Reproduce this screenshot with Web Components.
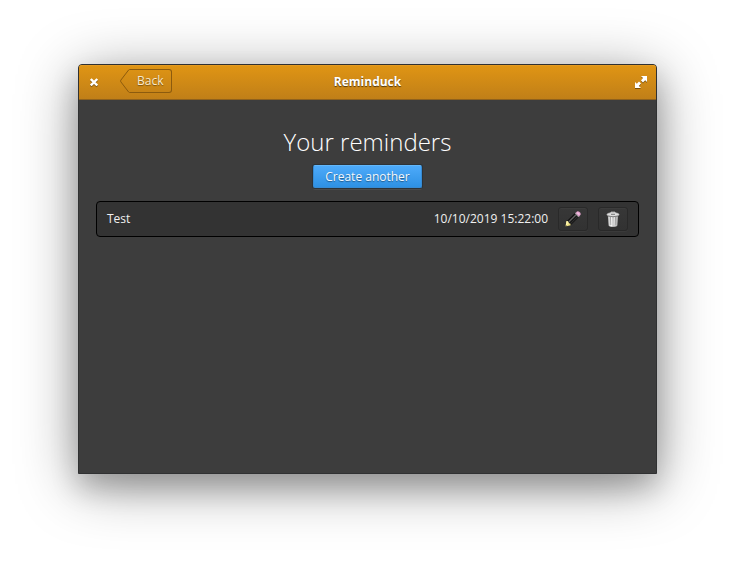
<!DOCTYPE html>
<html lang="en">
<head>
<meta charset="utf-8">
<meta name="viewport" content="width=device-width, initial-scale=1">
<title>Reminduck</title>
<style>
html, body { margin: 0; background: #fff; }
body { font: 12px/16px "Open Sans", "Noto Sans", sans-serif; color: #fff; }
</style>
</head>
<body>
<reminder-app></reminder-app>
<script>
const define = (name, html) => customElements.define(name, class extends HTMLElement {
  constructor() {
    super();
    const t = document.createElement('template');
    t.innerHTML = '<style>:host,*{box-sizing:border-box}button{font:inherit;color:inherit;margin:0;cursor:pointer}svg{display:block}</style>' + html;
    this.attachShadow({ mode: 'open' }).append(t.content.cloneNode(true));
  }
});

define('back-button', `
<style>
:host { display: block; }
button { display: flex; height: 24px; padding: 0; border: 0; background: none; color: #fbe9cd; text-shadow: 0 1px 1px #0006; }
.label { border: 1px solid #8c5b0e; border-left: 0; border-radius: 0 3px 3px 0; padding: 3px 8px 3px 6px; }
</style>
<button type="button">
  <svg width="11" height="24" viewBox="0 0 11 24" fill="none" stroke="#8c5b0e" aria-hidden="true"><path d="M11 .5H9.5Q9 .5 8.6 1L.8 11.2Q.3 12 .8 12.8L8.6 23Q9 23.5 9.5 23.5H11"/></svg>
  <span class="label"><slot></slot></span>
</button>`);

define('header-bar', `
<style>
:host { display: grid; grid-template-columns: 1fr auto 1fr; align-items: center; height: 35px; padding: 0 8px;
  background: linear-gradient(#e09514, #c07f18); border-bottom: 1px solid #8f611c; border-radius: 3px 3px 0 0;
  box-shadow: inset 0 1px #e59b20; }
.left { display: flex; align-items: center; gap: 18px; padding-bottom: 2px; }
.right { display: flex; justify-content: flex-end; }
h1 { margin: 0; font-size: 12px; line-height: 16px; font-weight: 700; text-shadow: 0 1px 1px #0009; }
.icon { padding: 0; border: 0; background: none; filter: drop-shadow(0 1px 0 #0006); }
.close { padding: 2px 3px 0; }
</style>
<div class="left">
  <button class="icon close" type="button" aria-label="Close"><svg width="9" height="9" viewBox="0 0 9 9" stroke="#fff" stroke-width="2.4"><path d="M.8 1l6.500 6.500M7.300 1L.8 7.500"/></svg></button>
  <div class="nav"><slot name="nav"></slot></div>
</div>
<h1><slot></slot></h1>
<div class="right">
  <button class="icon" type="button" aria-label="Maximize"><svg width="14" height="14" viewBox="0 0 14 14" fill="#fff"><path d="M7 1h6v6l-1.800-1.800L9 7.400 7 5.400l2-2.400zM1 7l1.800 1.800L5 6.600l2 2-2.200 2.400L7 13H1z"/></svg></button>
</div>`);

define('suggested-button', `
<style>
:host { display: inline-block; }
button { display: block; height: 23px; padding: 3px 11px 2px; border: 1px solid #378bd3; border-top-color: #62b7fa; border-radius: 2px;
  background: linear-gradient(#4daafa, #2e91e4); text-shadow: 0 1px 1px #0006; line-height: 16px;
  box-shadow: 0 0 0 1px #2d3338, 0 2px #4b4b4b; color: #f3f8fd; }
</style>
<button type="button"><slot></slot></button>`);

define('icon-button', `
<style>
:host { display: block; }
button { display: grid; place-items: center; width: 30px; height: 24px; padding: 0; border: 1px solid #292929; border-radius: 3px;
  background: linear-gradient(#373737, #323232); box-shadow: inset 0 1px #3c3c3c, 0 1px #3a3a3a; }
.glyph { display: none; }
:host([icon=edit]) .edit, :host([icon=delete]) .delete { display: block; }
</style>
<button type="button">
  <svg class="glyph edit" width="16" height="16" viewBox="0 0 16 16">
    <path d="M1.700 10.300L10.200 1.800l4 4-8.500 8.500z" fill="#101010"/>
    <path d="M3.200 10.600L10.600 3.200l1 1-7.400 7.400z" fill="#606060"/>
    <path d="M4.800 12.500l7.600-7.600.8.800-7.600 7.600z" fill="#303030"/>
    <path d="M9.800 2.500l1-1 3.700 3.700-1 1z" fill="#999"/>
    <path d="M10.600 2L12 .6q1-.6 2.200.1l1.100 1.100q.8 1.200.1 2.200L14 5.400z" fill="#e4a0cd"/>
    <path d="M11.700 2l1-.8 2 1.900-.7.900z" fill="#f5c5e5"/>
    <path d="M1.500 10.200q1.500-.5 2.200 1.800 2.200.5 2 2.200L.5 15.500z" fill="#eee184"/>
    <path d="M1.500 10.200q1.500-.5 2.200 1.800L.5 15.500z" fill="#fff5ab"/>
    <path d="M.8 13.900l1.300 1.300-1.800.6z" fill="#222"/>
  </svg>
  <svg class="glyph delete" width="16" height="16" viewBox="0 0 16 16">
    <defs><linearGradient id="g"><stop stop-color="#b4b4b4"/><stop offset=".35" stop-color="#f8f8f8"/><stop offset="1" stop-color="#a4a4a4"/></linearGradient></defs>
    <path d="M2.800 4h10.400l-.8 10.500Q12 15.800 8 15.800t-4.400-1.300z" fill="url(#g)"/>
    <path d="M5.500 6l.4 8M8 6v8.500M10.500 6l-.4 8" stroke="#989898" stroke-width=".9" fill="none"/>
    <path d="M6.700 6l.3 8M9.300 6L9 14" stroke="#eee" stroke-width=".8" fill="none"/>
    <ellipse cx="8" cy="3.600" rx="6.200" ry="2.100" fill="#dedede" stroke="#929292" stroke-width=".6"/>
    <path d="M3 5q5 1.500 10 0" stroke="#656565" stroke-width=".7" fill="none"/>
    <path d="M6 3V1.200h4V3" fill="none" stroke="#ddd"/>
    <path d="M6 3.300h4" stroke="#777"/>
  </svg>
</button>`);

define('reminder-row', `
<style>
:host { display: flex; align-items: center; gap: 10px; padding: 5px 10px; border: 1px solid #000; border-radius: 4px; background: #333; }
.name { flex: 1; }
.name, .time { color: #f0f0f0; }
</style>
<span class="name"><slot></slot></span>
<span class="time"><slot name="time"></slot></span>
<icon-button icon="edit"></icon-button>
<icon-button icon="delete"></icon-button>`);

define('reminder-app', `
<style>
:host { display: flex; min-height: 100vh; padding: 64px 78px 92px; }
.window { flex: 1; min-width: 0; border: 1px solid #303132; border-radius: 4px 4px 0 0; background: #3d3d3d;
  box-shadow: 0 14px 28px #0003, 0 10px 60px #00000066; }
main { display: flex; flex-direction: column; align-items: center; padding: 26px 17px; }
h2 { margin: 0 0 7px; font-size: 24px; line-height: 32px; font-weight: 300; }
.list { align-self: stretch; margin: 13px 0 0; padding: 0; list-style: none; }
</style>
<div class="window">
  <header-bar><back-button slot="nav">Back</back-button>Reminduck</header-bar>
  <main>
    <h2>Your reminders</h2>
    <suggested-button>Create another</suggested-button>
    <ul class="list"><li><reminder-row>Test<time slot="time" datetime="2019-10-10T15:22:00">10/10/2019 15:22:00</time></reminder-row></li></ul>
  </main>
</div>`);

for (const [icon, label] of [['edit', 'Edit reminder'], ['delete', 'Delete reminder']]) {
  const row = document.querySelector('reminder-app').shadowRoot.querySelector('reminder-row');
  row.shadowRoot.querySelector('icon-button[icon=' + icon + ']').shadowRoot.querySelector('button').setAttribute('aria-label', label);
}
</script>
</body>
</html>
